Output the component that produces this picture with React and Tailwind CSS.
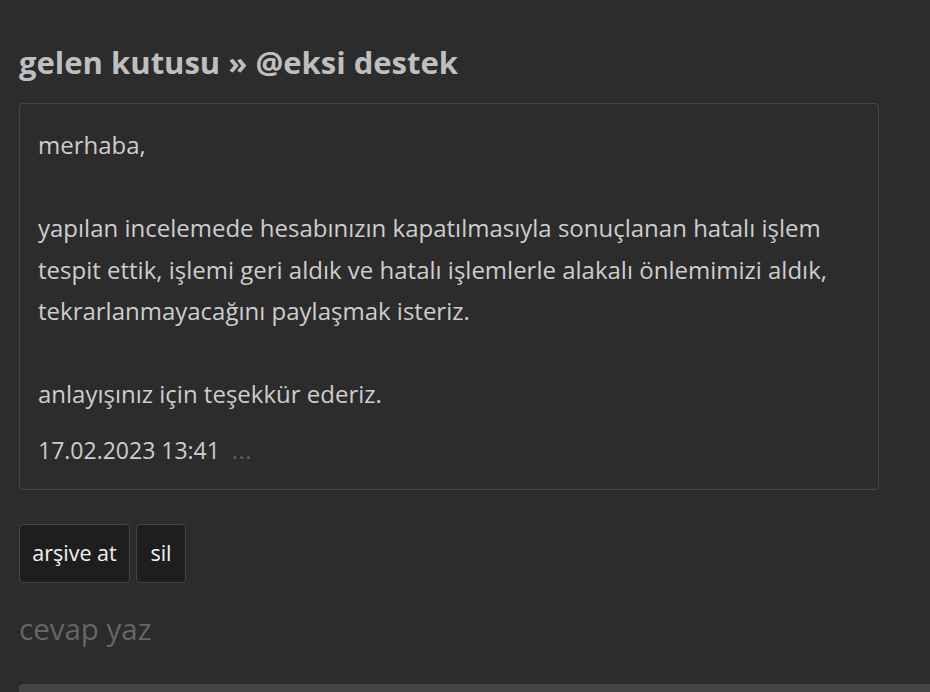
import React from 'react';

const font = { fontFamily: '"Open Sans", "Noto Sans", sans-serif' };

const App = () => {
  return (
    <div className="min-h-[692px] bg-[#2c2c2c] pl-[19px] pt-[42px] overflow-hidden" style={font}>
      <h1 className="text-[31px] leading-[40px] font-bold text-[#bfbfbf] whitespace-nowrap">
        gelen kutusu » @eksi destek
      </h1>

      <div className="mt-[21px] w-[860px] rounded-[4px] border border-[#454545] px-[18px] pt-[20px] pb-[25px]">
        <div className="text-[24px] leading-[41.5px] text-[#cdcdcd] whitespace-nowrap">
          <p>merhaba,</p>
          <br />
          <p>
            yapılan incelemede hesabınızın kapatılmasıyla sonuçlanan hatalı işlem
            <br />
            tespit ettik, işlemi geri aldık ve hatalı işlemlerle alakalı önlemimizi aldık,
            <br />
            tekrarlanmayacağını paylaşmak isteriz.
          </p>
          <br />
          <p>anlayışınız için teşekkür ederiz.</p>
        </div>
        <div className="mt-[21px] flex items-center gap-[12px] text-[23px] leading-[28px] text-[#cdcdcd]">
          <span>17.02.2023 13:41</span>
          <span className="text-[#666] text-[22px] tracking-[1px]">...</span>
        </div>
      </div>

      <div className="mt-[34px] flex gap-[6px]">
        <button className="h-[59px] w-[111px] rounded-[4px] border border-[#444] bg-[#1e1e1e] text-[21.5px] text-[#f2f2f2]">
          arşive at
        </button>
        <button className="h-[59px] w-[50px] rounded-[4px] border border-[#444] bg-[#1e1e1e] text-[21.5px] text-[#f2f2f2]">
          sil
        </button>
      </div>

      <h2 className="mt-[26px] text-[29.5px] leading-[40px] text-[#666]">cevap yaz</h2>

      <div className="mt-[35px] h-[60px] w-[950px] rounded-[4px] bg-[#444]" />
    </div>
  );
};

export default App;
